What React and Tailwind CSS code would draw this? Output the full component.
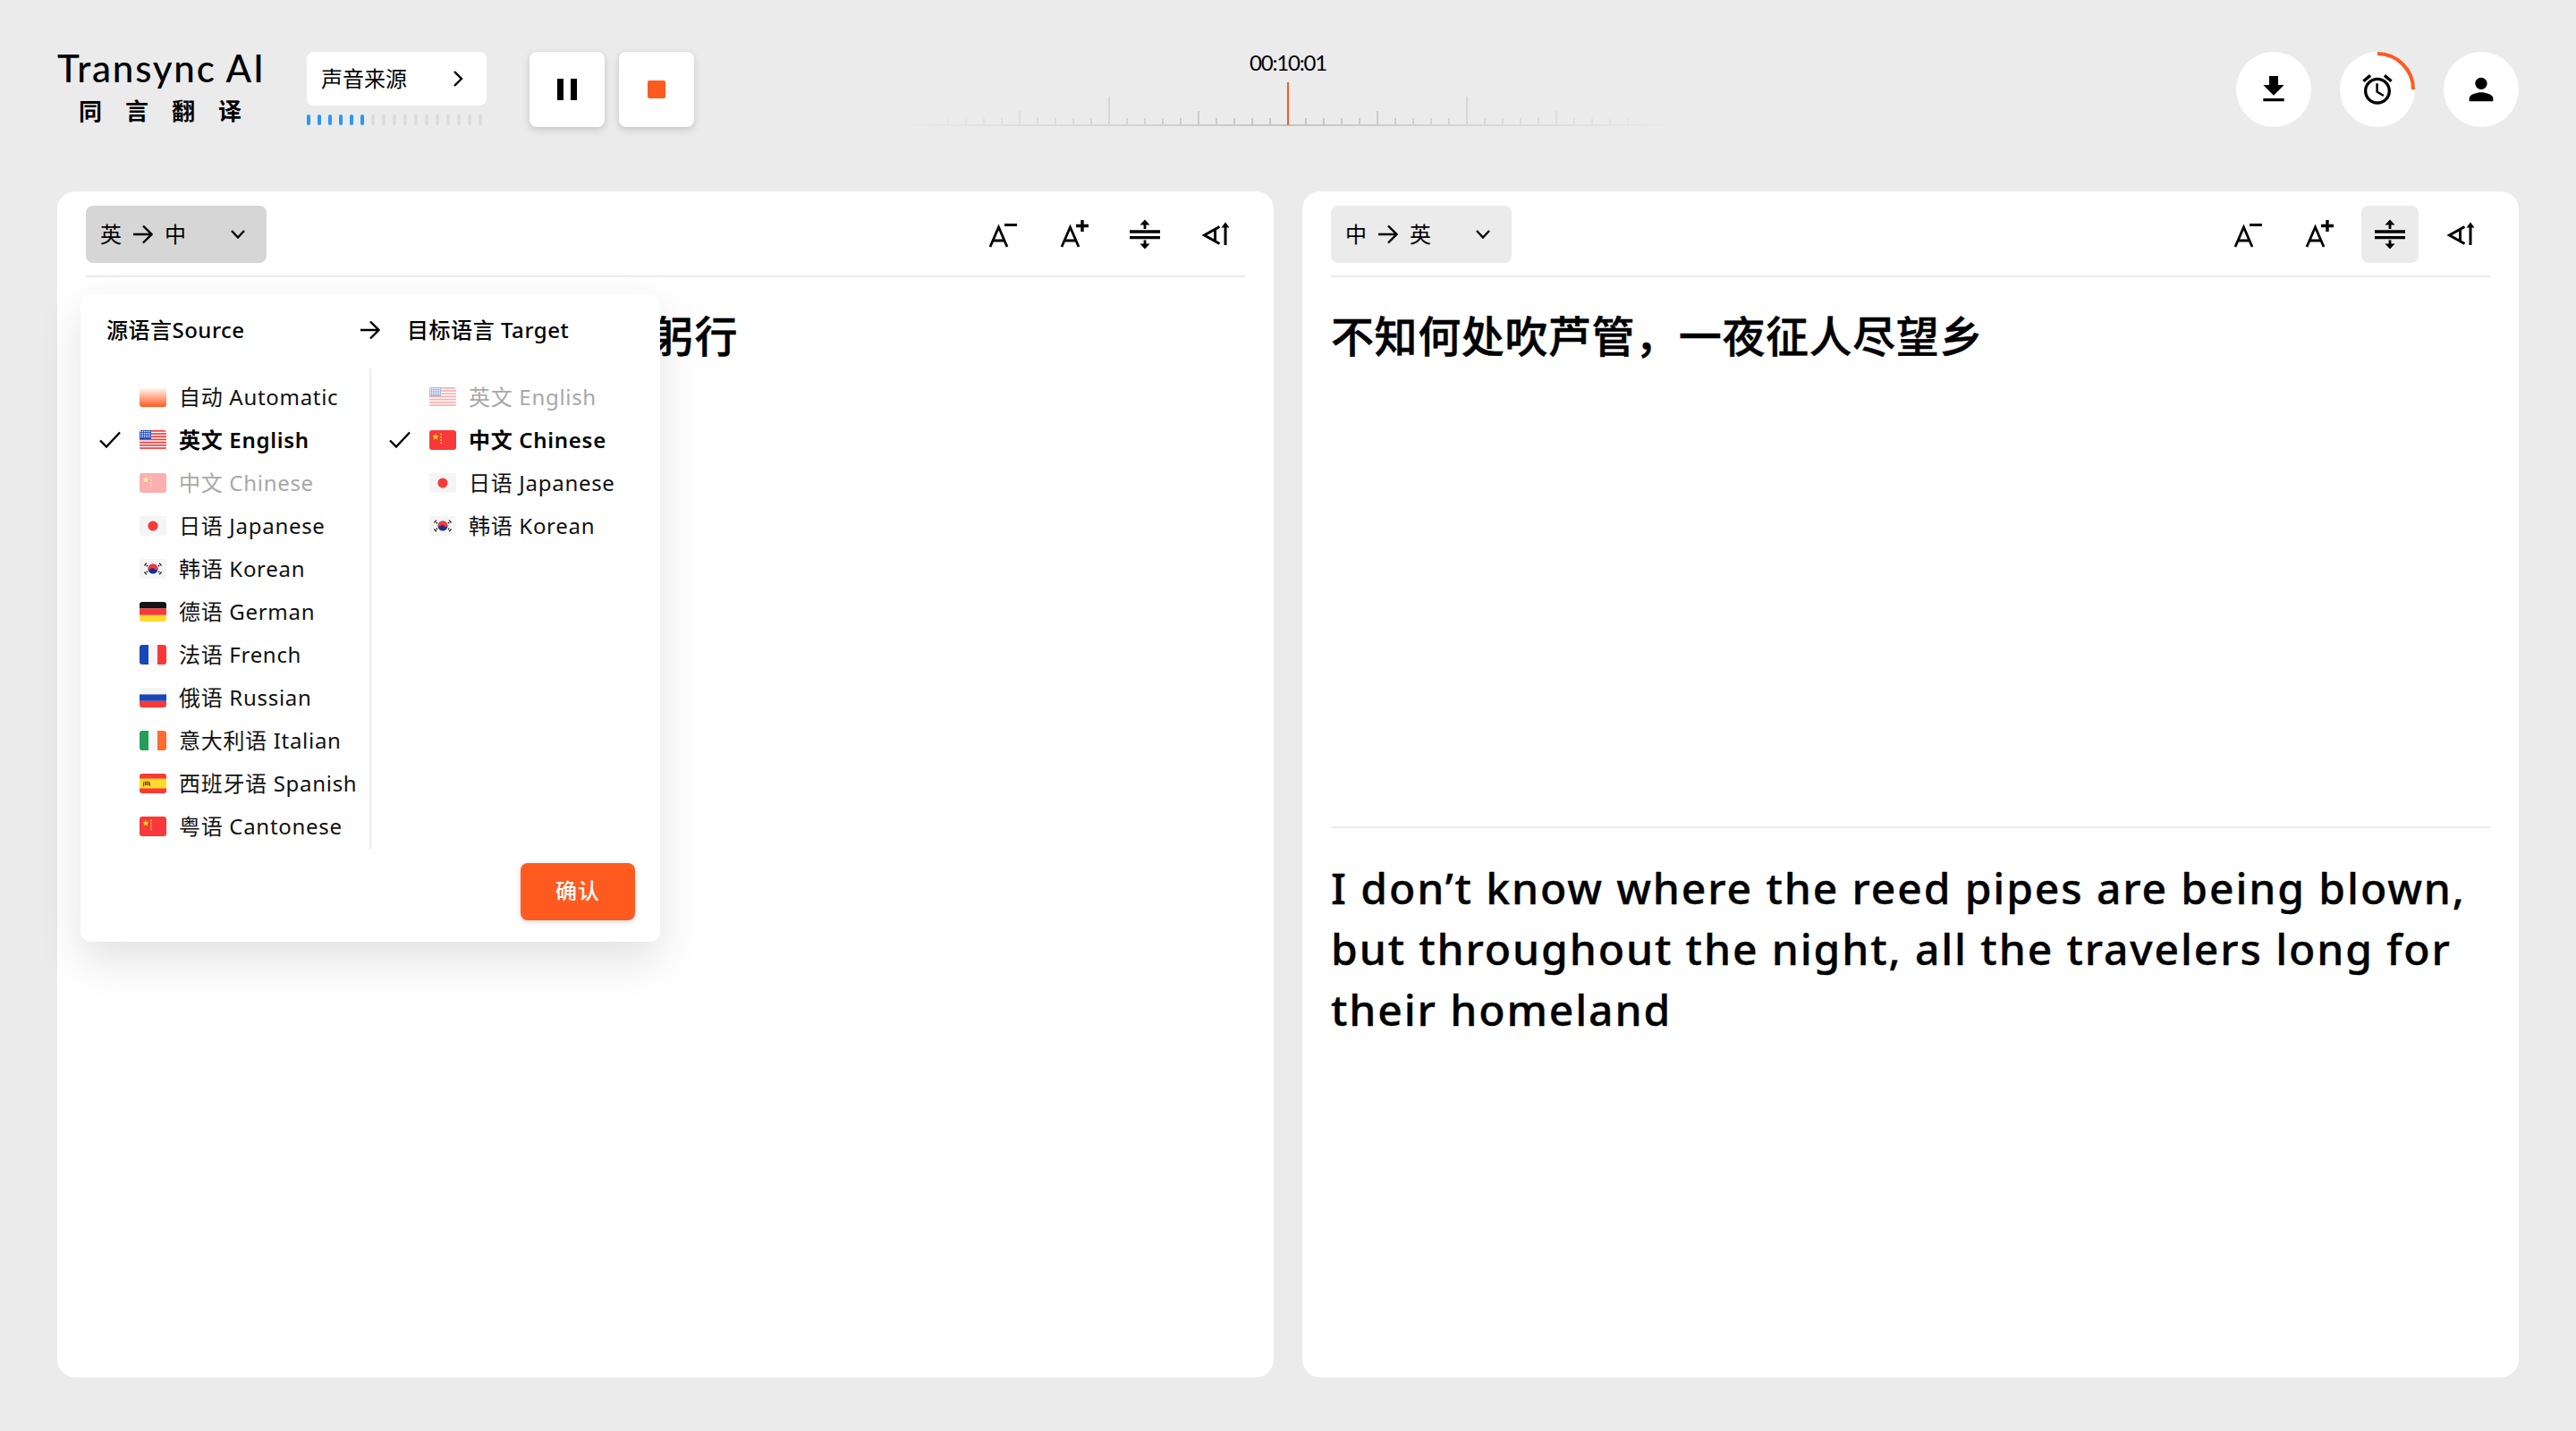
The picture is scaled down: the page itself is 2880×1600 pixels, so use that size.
import React from "react";

const Frame = ({ children, id }) => (
  <svg width="30" height="22" viewBox="0 0 30 22" className="shrink-0">
    <defs>
      <clipPath id={id}><rect width="30" height="22" rx="3" /></clipPath>
    </defs>
    <g clipPath={`url(#${id})`}>{children}</g>
  </svg>
);

const Tri = ({ id, a, b, c, vertical }) => (
  <Frame id={id}>
    {vertical ? (
      <>
        <rect width="10" height="22" fill={a} />
        <rect x="10" width="10" height="22" fill={b} />
        <rect x="20" width="10" height="22" fill={c} />
      </>
    ) : (
      <>
        <rect width="30" height="7.4" fill={a} />
        <rect y="7.4" width="30" height="7.4" fill={b} />
        <rect y="14.8" width="30" height="7.2" fill={c} />
      </>
    )}
  </Frame>
);

const flags = {
  auto: (id) => (
    <Frame id={id}>
      <defs>
        <linearGradient id={id + "g"} x1="0" y1="0" x2="0" y2="1">
          <stop offset="0" stopColor="#ffffff" />
          <stop offset="1" stopColor="#ff5a1f" />
        </linearGradient>
      </defs>
      <rect width="30" height="22" fill={`url(#${id}g)`} />
    </Frame>
  ),
  us: (id) => (
    <Frame id={id}>
      <rect width="30" height="22" fill="#fff" />
      {[0, 3.2, 6.4, 9.6, 12.8, 16, 19.2].map((y) => (
        <rect key={y} y={y} width="30" height="1.7" fill="#f93939" />
      ))}
      <rect width="13" height="10" fill="#1a47b8" />
      {[1.5, 3.5, 5.5, 7.5, 9.5, 11.5].map((x) =>
        [1.5, 3.5, 5.5, 7.5].map((y) => (
          <rect key={x + "-" + y} x={x - 0.6} y={y - 0.6} width="1.2" height="1.2" fill="#fff" />
        ))
      )}
    </Frame>
  ),
  cn: (id) => (
    <Frame id={id}>
      <rect width="30" height="22" fill="#f93939" />
      <polygon points="7,3.5 8,6.2 10.8,6.2 8.6,8 9.4,10.7 7,9.1 4.6,10.7 5.4,8 3.2,6.2 6,6.2" fill="#ffda2c" />
      {[3.5, 6.8, 10, 13.2].map((y) => (
        <circle key={y} cx="13" cy={y + 1} r="0.9" fill="#ffda2c" />
      ))}
    </Frame>
  ),
  jp: (id) => (
    <Frame id={id}>
      <rect width="30" height="22" fill="#f5f5f5" />
      <circle cx="15" cy="11" r="5.6" fill="#f93939" />
    </Frame>
  ),
  kr: (id) => (
    <Frame id={id}>
      <rect width="30" height="22" fill="#f5f5f5" />
      <circle cx="15" cy="11" r="5.5" fill="#1a2f8f" />
      <path d="M9.5 11a5.5 5.5 0 0 1 11 0c-1 1.6-3.4 1.2-4.3-.2-.7-1-2.6-1-3.4 0-.9.9-2.5 1.1-3.3.2z" fill="#f93939" />
      <path d="M5.5 7.5l2.4-2.8M7.8 8.4l1.2-1.4M24.5 7.5l-2.4-2.8M22.2 8.4l-1.2-1.4M5.5 14.5l2.4 2.8M7.8 13.6l1.2 1.4M24.5 14.5l-2.4 2.8M22.2 13.6l-1.2 1.4" stroke="#222" strokeWidth="1.3" fill="none" />
    </Frame>
  ),
  de: (id) => <Tri id={id} a="#151515" b="#f93939" c="#ffda2c" />,
  fr: (id) => <Tri id={id} a="#1a47b8" b="#f5f5f5" c="#f93939" vertical />,
  ru: (id) => <Tri id={id} a="#f5f5f5" b="#1a47b8" c="#f93939" />,
  it: (id) => <Tri id={id} a="#249f58" b="#f5f5f5" c="#ff6c2d" vertical />,
  es: (id) => (
    <Frame id={id}>
      <rect width="30" height="22" fill="#f93939" />
      <rect y="5.5" width="30" height="11" fill="#ffda2c" />
      <rect x="4.5" y="8" width="7" height="5.5" rx="1" fill="#d4af2c" />
      <rect x="6" y="9" width="1.6" height="4" fill="#a53a2e" />
      <rect x="8.6" y="9" width="1.6" height="4" fill="#a53a2e" />
      <rect x="4" y="9.5" width="1" height="4.5" fill="#1a47b8" />
      <rect x="11" y="9.5" width="1" height="4.5" fill="#1a47b8" />
    </Frame>
  ),
};

const source = [
  { f: "auto", t: "自动 Automatic" },
  { f: "us", t: "英文 English", on: true },
  { f: "cn", t: "中文 Chinese", off: true },
  { f: "jp", t: "日语 Japanese" },
  { f: "kr", t: "韩语 Korean" },
  { f: "de", t: "德语 German" },
  { f: "fr", t: "法语 French" },
  { f: "ru", t: "俄语 Russian" },
  { f: "it", t: "意大利语 Italian" },
  { f: "es", t: "西班牙语 Spanish" },
  { f: "cn", t: "粤语 Cantonese" },
];
const target = [
  { f: "us", t: "英文 English", off: true },
  { f: "cn", t: "中文 Chinese", on: true },
  { f: "jp", t: "日语 Japanese" },
  { f: "kr", t: "韩语 Korean" },
];

const Check = () => (
  <svg width="24" height="20" viewBox="0 0 24 20" fill="none" stroke="#000" strokeWidth="2.4">
    <path d="M1 10.5L8 17.5 23 1.5" />
  </svg>
);

const Arrow = ({ w = 22 }) => (
  <svg width={w} height="22" viewBox="0 0 22 22" fill="none" stroke="#000" strokeWidth="2.4" className="shrink-0">
    <path d="M0 11H20M11 1.5L20.5 11 11 20.5" />
  </svg>
);

const LangRow = ({ item, id }) => (
  <div className="flex h-12 items-center">
    <div className="flex w-[45px] shrink-0 items-center">{item.on && <Check />}</div>
    <div className={item.off ? "flex opacity-40" : "flex"}>{flags[item.f](id)}</div>
    <span
      className={`ml-[14px] whitespace-nowrap text-2xl leading-none tracking-[0.7px] ${
        item.on ? "font-semibold text-black" : item.off ? "text-[#a8a8a8]" : "text-[#111]"
      }`}
    >
      {item.t}
    </span>
  </div>
);

const IconBtn = ({ active, children }) => (
  <button className={`flex h-16 w-16 items-center justify-center rounded-lg ${active ? "bg-[#ebebeb]" : ""}`}>
    <svg width="64" height="64" viewBox="0 0 64 64" fill="none">{children}</svg>
  </button>
);

const Toolbar = ({ label, open, spacingActive }) => (
  <div className="flex h-[80px] items-start justify-between border-b-2 border-[#ebebeb]">
    <button className={`flex h-16 w-[202px] items-center justify-between rounded-lg pl-4 pr-6 ${open ? "bg-[#d6d6d6]" : "bg-[#ebebeb]"}`}>
      <span className="flex items-center gap-[13px] text-2xl leading-none text-black">
        <span>{label[0]}</span>
        <Arrow />
        <span>{label[1]}</span>
      </span>
      <svg width="16" height="10" viewBox="0 0 16 10" fill="none" stroke="#000" strokeWidth="2.4">
        <path d="M1 1l7 7.5L15 1" />
      </svg>
    </button>
    <div className="flex gap-4">
      <IconBtn>
        <path d="M19 46L28.5 24 38 46M22.5 39H34.5" stroke="#000" strokeWidth="2.8" />
        <path d="M35 21.5H49" stroke="#000" strokeWidth="3" />
      </IconBtn>
      <IconBtn>
        <path d="M19 46L28.5 24 38 46M22.5 39H34.5" stroke="#000" strokeWidth="2.8" />
        <path d="M35 22.5H49M42 16V29" stroke="#000" strokeWidth="3.4" />
      </IconBtn>
      <IconBtn active={spacingActive}>
        <path d="M15 29H49M15 35.7H49" stroke="#000" strokeWidth="3.3" />
        <path d="M32 15.5L37.5 21.5H33.4V26H30.6V21.5H26.5z" fill="#000" />
        <path d="M32 48.5L37.5 42.5H33.4V38.5H30.6V42.5H26.5z" fill="#000" />
      </IconBtn>
      <IconBtn>
        <path d="M35.5 23.5L18.5 33 35.5 42.5M30.5 26.5V39.5" stroke="#000" strokeWidth="3" />
        <path d="M42 23V44" stroke="#000" strokeWidth="3" />
        <path d="M42 18.5L46.5 24.5H37.5z" fill="#000" />
      </IconBtn>
    </div>
  </div>
);

const ticks = Array.from({ length: 39 }, (_, i) => i - 19);

const Ruler = () => (
  <svg width="880" height="50" viewBox="0 0 880 50" className="block">
    <defs>
      <linearGradient id="rg" gradientUnits="userSpaceOnUse" x1="0" y1="0" x2="880" y2="0">
        <stop offset="0" stopColor="#ebebeb" />
        <stop offset="0.5" stopColor="#c4c4c4" />
        <stop offset="1" stopColor="#ebebeb" />
      </linearGradient>
    </defs>
    {ticks.map((k) => {
      const x = 440 + k * 20;
      if (k === 0) return null;
      const h = k % 10 === 0 ? 32 : k % 5 === 0 ? 16 : 8;
      return <path key={k} d={`M${x} ${48 - h}V48`} stroke="url(#rg)" strokeWidth="2" />;
    })}
    <rect x="0" y="47" width="880" height="2" fill="url(#rg)" />
    <rect x="439" y="0" width="2" height="48" fill="#f4582a" />
  </svg>
);

const Header = () => (
  <header className="grid h-[84px] grid-cols-[1fr_880px_1fr]">
    <div className="flex items-start">
      <div className="flex w-[279px] flex-col items-start">
        <div className="w-[232px] whitespace-nowrap font-['Lato',sans-serif] text-[42px] font-medium leading-[36px] tracking-[1.8px] text-black">Transync AI</div>
        <div className="ml-6 mt-[14px] whitespace-nowrap text-[26px] font-bold leading-[32px] tracking-[26px] text-black">同言翻译</div>
      </div>
      <div className="w-[201px]">
        <button className="flex h-[60px] w-full items-center justify-between rounded-lg bg-white pl-4 pr-[26px]">
          <span className="text-2xl leading-none text-black">声音来源</span>
          <svg width="12" height="18" viewBox="0 0 12 18" fill="none" stroke="#000" strokeWidth="2.4">
            <path d="M2 1l8 8-8 8" />
          </svg>
        </button>
        <div className="mt-[10px] flex gap-2">
          {Array.from({ length: 17 }, (_, i) => (
            <span key={i} className={`h-3 w-1 rounded-full ${i < 6 ? "bg-[#2f95fb]" : "bg-[#dcdcdc]"}`} />
          ))}
        </div>
      </div>
      <div className="ml-12 flex gap-4">
        <button className="flex h-[84px] w-[84px] items-center justify-center gap-2 rounded-lg bg-white shadow-[0_3px_8px_rgba(0,0,0,0.16)]">
          <span className="h-6 w-[7px] bg-black" />
          <span className="h-6 w-[7px] bg-black" />
        </button>
        <button className="flex h-[84px] w-[84px] items-center justify-center rounded-lg bg-white shadow-[0_3px_8px_rgba(0,0,0,0.16)]">
          <span className="h-5 w-5 rounded-[2px] bg-[#ff5a1f]" />
        </button>
      </div>
    </div>
    <div className="flex flex-col items-center">
      <div className="h-6 font-['Lato',sans-serif] text-2xl leading-6 tracking-[-1.2px] text-black">00:10:01</div>
      <div className="mt-[10px]"><Ruler /></div>
    </div>
    <div className="flex justify-end gap-8">
      <button className="flex h-[84px] w-[84px] items-center justify-center rounded-full bg-white">
        <svg width="40" height="40" viewBox="0 0 24 24" fill="#000"><path d="M19 9h-4V3H9v6H5l7 7 7-7zM5 18v2h14v-2H5z" /></svg>
      </button>
      <button className="relative flex h-[84px] w-[84px] items-center justify-center rounded-full bg-white">
        <svg width="40" height="40" viewBox="0 0 24 24" fill="#000"><path d="M22 5.72l-4.6-3.86-1.29 1.53 4.6 3.86L22 5.72zM7.88 3.39L6.6 1.86 2 5.71l1.29 1.53 4.59-3.85zM12.5 8H11v6l4.75 2.85.75-1.23-4-2.37V8zM12 4c-4.97 0-9 4.03-9 9s4.03 9 9 9 9-4.03 9-9-4.03-9-9-9zm0 16c-3.87 0-7-3.13-7-7s3.13-7 7-7 7 3.13 7 7-3.13 7-7 7z" /></svg>
        <svg width="84" height="84" viewBox="0 0 84 84" fill="none" className="absolute left-0 top-0">
          <path d="M42 2a40 40 0 0 1 40 40" stroke="#ff5a1f" strokeWidth="4" />
        </svg>
      </button>
      <button className="flex h-[84px] w-[84px] items-center justify-center rounded-full bg-white">
        <svg width="40" height="40" viewBox="0 0 24 24" fill="#000"><path d="M12 12c2.21 0 4-1.79 4-4s-1.79-4-4-4-4 1.79-4 4 1.79 4 4 4zm0 2c-2.67 0-8 1.34-8 4v2h16v-2c0-2.66-5.33-4-8-4z" /></svg>
      </button>
    </div>
  </header>
);

const Popup = () => (
  <div className="absolute left-[26px] top-[115px] w-[648px] rounded-xl bg-white shadow-[0_20px_50px_rgba(0,0,0,0.12)]">
    <div className="flex h-[83px] items-center pb-[3px] text-2xl font-medium leading-none text-black">
      <span className="ml-[29px] w-[284px] tracking-[0.5px]">源语言Source</span>
      <Arrow />
      <span className="ml-[30px] tracking-[0.55px]">目标语言 Target</span>
    </div>
    <div className="flex">
      <div className="w-[325px] border-r-2 border-[#ededed] pb-[1px] pl-[21px] pt-2">
        {source.map((it, i) => <LangRow key={i} item={it} id={"s" + i} />)}
      </div>
      <div className="pl-[20px] pt-2">
        {target.map((it, i) => <LangRow key={i} item={it} id={"t" + i} />)}
      </div>
    </div>
    <div className="flex justify-end pb-6 pr-7 pt-4">
      <button className="flex h-16 w-32 items-center justify-center rounded-lg bg-[#ff5a1f] pb-[2px] text-2xl font-medium tracking-[1px] text-white shadow-[0_2px_6px_rgba(0,0,0,0.15)]">确认</button>
    </div>
  </div>
);

const BigZh = ({ children }) => (
  <p className="text-5xl font-medium leading-[68px] tracking-[0.6px] text-black [-webkit-text-stroke:0.5px_black]">{children}</p>
);

export default function App() {
  return (
    <div className="h-[1600px] w-[2880px] overflow-hidden bg-[#ebebeb] px-16 pt-[58px] font-['Noto_Sans','Noto_Sans_CJK_SC',sans-serif]">
      <Header />
      <main className="mt-[72px] flex h-[1326px] gap-8">
        <section className="relative w-[1360px] rounded-[20px] bg-white px-8 pt-4">
          <Toolbar label={["英", "中"]} open />
          <div className="pt-8"><BigZh>纸上得来终觉浅，绝知此事要躬行</BigZh></div>
          <Popup />
        </section>
        <section className="w-[1360px] rounded-[20px] bg-white px-8 pt-4">
          <Toolbar label={["中", "英"]} spacingActive />
          <div className="h-[616px] border-b-2 border-[#ebebeb] pt-8"><BigZh>不知何处吹芦管，一夜征人尽望乡</BigZh></div>
          <div className="pt-[33px]"><p className="text-5xl font-medium leading-[68px] tracking-[1.9px] text-black [-webkit-text-stroke:0.4px_black]">I don’t know where the reed pipes are being blown, but throughout the night, all the travelers long for their homeland</p></div>
        </section>
      </main>
    </div>
  );
}
